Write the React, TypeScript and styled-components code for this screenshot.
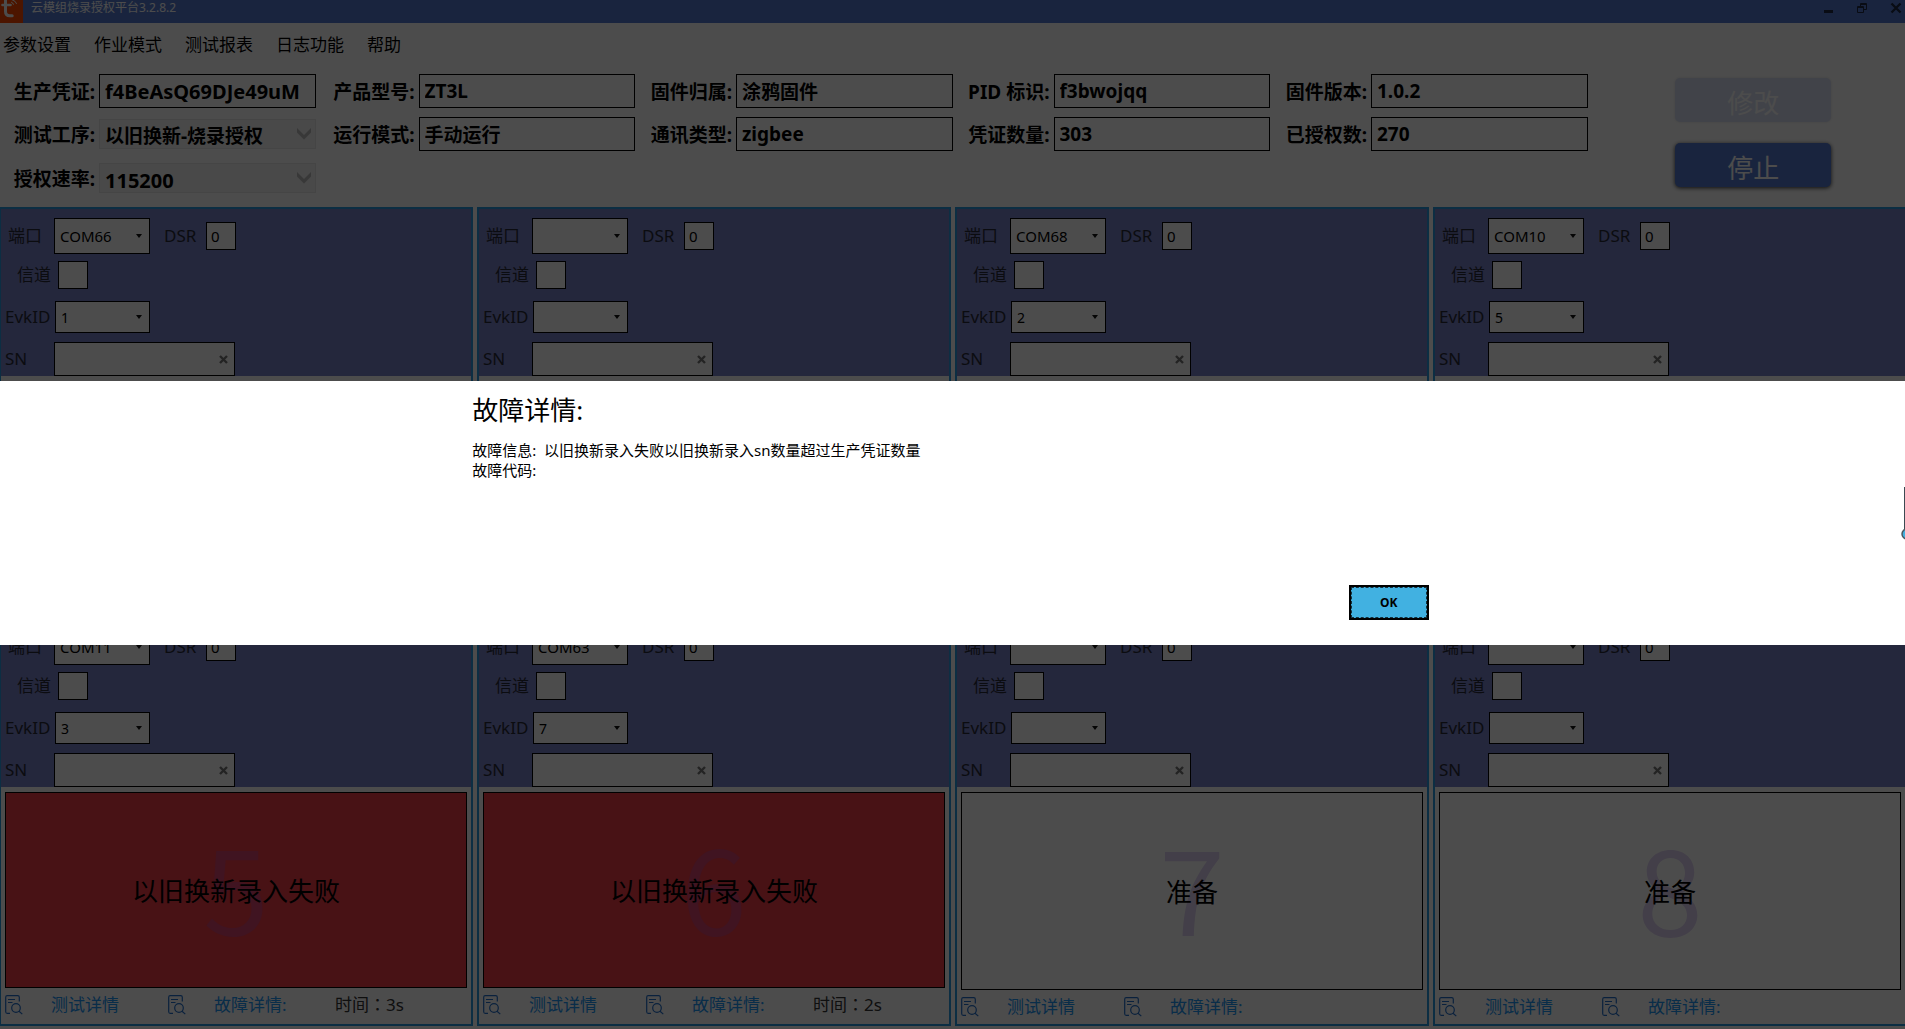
import React, { useId } from "react";
import styled, { createGlobalStyle } from "styled-components";

const GlobalStyle = createGlobalStyle`
  * { box-sizing: border-box; }
  body {
    margin: 0;
    background: #fff;
    color: #000;
    font-family: "Noto Sans", "Noto Sans CJK SC", sans-serif;
  }
  button, input, select { font-family: inherit; color: inherit; }
`;

const Window = styled.div`
  display: flex;
  flex-direction: column;
  min-height: 100vh;
  overflow: hidden;
`;

/* ---------- title bar ---------- */

const TitleBar = styled.header`
  display: flex;
  align-items: flex-start;
  height: 23px;
  background: #557bd0;
  color: #fff;
`;

const AppTitle = styled.h1`
  flex: 1;
  margin: 0;
  padding-left: 8px;
  font-size: 12px;
  font-weight: 400;
  line-height: 16px;
`;

const WindowButtons = styled.div`
  display: flex;
  gap: 20px;
  padding: 1px 2px 0 0;
`;

const WindowButton = styled.button`
  display: flex;
  padding: 0;
  border: 0;
  background: none;
  color: #1e2a44;
`;

/* ---------- menu ---------- */

const Menu = styled.nav`
  display: flex;
  gap: 23px;
  padding-left: 3px;
`;

const MenuLink = styled.a`
  color: #000;
  font-size: 17px;
  line-height: 44px;
  text-decoration: none;
`;

/* ---------- settings ---------- */

const Settings = styled.form`
  display: grid;
  grid-template-columns: repeat(6, minmax(0, 1fr));
  grid-template-rows: 34px 34px 36px;
  row-gap: 9px;
  padding: 7px 0 11px;
  font-size: 19px;
  font-weight: 700;
`;

const Field = styled.div<{ $col: number; $row: number }>`
  grid-column: ${(p) => p.$col};
  grid-row: ${(p) => p.$row};
  display: flex;
  align-items: center;
  padding-right: ${(p) => (p.$col === 1 ? 2 : 0)}px;
`;

const FieldLabel = styled.label<{ $first: boolean }>`
  flex: 0 0 ${(p) => (p.$first ? 99 : 101)}px;
  padding-right: 4px;
  text-align: right;
  white-space: nowrap;
`;

const FieldInput = styled.input<{ $large?: boolean }>`
  flex: 1;
  min-width: 0;
  height: 34px;
  padding: 0 5px;
  border: 1px solid #000;
  border-radius: 0;
  background: #fff;
  font-size: ${(p) => (p.$large ? 20 : 19)}px;
  font-weight: 700;
`;

const SelectBox = styled.span<{ $grow?: boolean; $width?: number }>`
  position: relative;
  display: flex;
  flex: ${(p) => (p.$grow ? "1" : "none")};
  width: ${(p) => (p.$width ? `${p.$width}px` : "auto")};
`;

const FieldSelect = styled.select<{ $large?: boolean }>`
  width: 100%;
  height: 30px;
  padding: 3px 5px 0;
  border: 1px solid #e6e6e6;
  border-radius: 0;
  background: #f3f3f3;
  font-size: ${(p) => (p.$large ? 20 : 19)}px;
  font-weight: 700;
  appearance: none;
  &:disabled { color: #000; opacity: 1; }
`;

const SelectMark = styled.svg<{ $right: number }>`
  position: absolute;
  top: 0;
  bottom: 0;
  right: ${(p) => p.$right}px;
  margin: auto 0;
  pointer-events: none;
`;

const Actions = styled.div`
  grid-column: 6;
  grid-row: 1 / span 3;
  display: flex;
  flex-direction: column;
  align-items: center;
  gap: 21px;
  padding: 4px 0 0 14px;
`;

const ActionButton = styled.button`
  flex: none;
  width: 156px;
  height: 44px;
  padding: 5px 0 0;
  border: 0;
  border-radius: 5px;
  background: #557bd0;
  box-shadow: 0 1px 4px rgba(0, 0, 0, 0.8);
  color: #fff;
  font-size: 26px;
  line-height: 36px;
  &:disabled {
    background: #dae1f4;
    box-shadow: 0 0 3px rgba(0, 0, 0, 0.12);
    color: #fff;
  }
`;

/* ---------- station panels ---------- */

const Stations = styled.main`
  flex: 1;
  display: grid;
  grid-template-columns: repeat(4, minmax(0, 1fr));
  grid-auto-rows: 1fr;
  gap: 3px 4px;
  margin: 0 -2px 3px -1px;
`;

const Panel = styled.section`
  display: flex;
  flex-direction: column;
  border: 2px solid #2a9be0;
  background: #fff;
`;

const PanelForm = styled.form`
  display: grid;
  grid-template-rows: 43px 40px 41px 34px;
  align-items: start;
  padding: 9px 0 0 4px;
  background: #7b82c8;
  font-size: 17px;
`;

const PanelRow = styled.div`
  display: flex;
  align-items: center;
`;

const PanelLabel = styled.label<{ $width: number; $indent?: number }>`
  width: ${(p) => p.$width}px;
  padding-left: ${(p) => p.$indent ?? 0}px;
  color: #272a38;
  line-height: 28px;
  white-space: nowrap;
`;

const PanelSelect = styled.select<{ $tall?: boolean }>`
  width: 100%;
  height: ${(p) => (p.$tall ? 36 : 32)}px;
  padding: 0 5px;
  border: 1px solid #000;
  border-radius: 0;
  background: #fff;
  font-size: ${(p) => (p.$tall ? 15 : 14)}px;
  appearance: none;
`;

const SmallInput = styled.input`
  width: 30px;
  height: 28px;
  padding: 0 4px;
  border: 1px solid #000;
  border-radius: 0;
  background: #fff;
  font-size: 15px;
`;

const SnBox = styled.span`
  display: flex;
  align-items: center;
  width: 181px;
  height: 34px;
  padding-right: 6px;
  border: 1px solid #000;
  background: #fff;
`;

const SnInput = styled.input`
  flex: 1;
  min-width: 0;
  border: 0;
  background: none;
  outline: 0;
  font-size: 15px;
`;

const ClearButton = styled.button`
  display: flex;
  padding: 0;
  border: 0;
  background: none;
  color: #777;
`;

const Status = styled.div<{ $failed?: boolean }>`
  flex: 1;
  display: grid;
  place-items: center;
  margin: 5px 4px 0;
  border: 1px solid #000;
  background: ${(p) => (p.$failed ? "#f03c49" : "#fff")};
`;

const StationNumber = styled.span`
  grid-area: 1 / 1;
  padding-bottom: 12px;
  color: rgba(140, 94, 212, 0.27);
  font-family: "Noto Sans CJK SC", sans-serif;
  font-size: 118px;
  line-height: 120px;
`;

const StatusText = styled.strong`
  grid-area: 1 / 1;
  position: relative;
  padding-top: 2px;
  font-size: 26px;
  font-weight: 400;
  line-height: 36px;
`;

const PanelFooter = styled.footer<{ $raised?: boolean }>`
  display: grid;
  grid-template-columns: 163px 167px auto;
  padding: 0 4px ${(p) => (p.$raised ? 2 : 0)}px;
  font-size: 17px;
  line-height: 34px;
`;

const DetailLink = styled.a`
  display: flex;
  align-items: center;
  gap: 28px;
  color: #2196f3;
  text-decoration: none;
`;

const Elapsed = styled.span`
  color: #333;
  font-family: "Noto Sans", "Noto Sans CJK TC", sans-serif;
`;

/* ---------- dialog ---------- */

const Scrim = styled.div`
  position: fixed;
  inset: 0;
  display: flex;
  align-items: center;
  padding-bottom: 3px;
  background: rgba(0, 0, 0, 0.7);
`;

const Dialog = styled.div`
  position: relative;
  flex: 1;
  overflow: hidden;
  padding: 11px 25% 25px calc(25% - 4px);
  background: #fff;
`;

const DialogTitle = styled.h2`
  margin: 0 0 12px;
  font-size: 26px;
  font-weight: 400;
  line-height: 36px;
`;

const DialogBody = styled.p`
  min-height: 145px;
  margin: 0;
  font-size: 15px;
  line-height: 20px;
  white-space: pre-line;
`;

const DialogActions = styled.div`
  display: flex;
  justify-content: flex-end;
`;

const OkButton = styled.button`
  width: 80px;
  height: 35px;
  padding: 0;
  border: 2px solid #000;
  outline: 1px dashed #14303c;
  outline-offset: -3px;
  background: #41b1e1;
  font-size: 12px;
  font-weight: 700;
`;

const EdgeSlider = styled.svg`
  position: absolute;
  top: 105px;
  right: 0;
`;

/* ---------- drawings ---------- */

const Logo = () => (
  <svg width="23" height="23" viewBox="0 0 23 23" aria-hidden="true">
    <rect width="23" height="23" fill="#ff4800" />
    <path d="M5.500 0v11.500q0 4.300 4.300 4.300h2.400" fill="none" stroke="#fff" strokeWidth="3" strokeLinecap="round" />
    <path d="M2.500 5h8" fill="none" stroke="#fff" strokeWidth="2.600" strokeLinecap="round" />
    <path d="M11.500 2.200q1.600.4 1.900 2.100M12.500 0q3.200.8 4 3.500" fill="none" stroke="#fff" strokeWidth="1" strokeLinecap="round" />
  </svg>
);

const Chevron = () => (
  <SelectMark $right={5} width="14" height="12" viewBox="0 0 14 12" aria-hidden="true">
    <path d="M0 0l7 7 7-7v4.500l-7 7-7-7z" fill="#bdbdbd" />
  </SelectMark>
);

const Caret = () => (
  <SelectMark $right={8} width="6" height="4" viewBox="0 0 6 4" aria-hidden="true">
    <path d="M0 0h6L3 4z" fill="#111" />
  </SelectMark>
);

const FileSearch = () => (
  <svg width="18" height="20" viewBox="0 0 18 20" fill="none" stroke="#2470cc" strokeWidth="1.200" aria-hidden="true">
    <path d="M5 18.300H2.200Q.7 18.300.7 16.800V2.200Q.7.7 2.200.7h10.600q1.500 0 1.500 1.500v4.300" />
    <path d="M3 4.500h7M3 7.500h4.500" />
    <circle cx="11" cy="13" r="4.300" />
    <path d="M14 16.300l3.300 2.800" />
  </svg>
);

/* ---------- data ---------- */

type FieldData = {
  label: string;
  value: string;
  col: number;
  row: number;
  select?: boolean;
  large?: boolean;
};

const FIELDS: FieldData[] = [
  { label: "生产凭证:", value: "f4BeAsQ69DJe49uM", col: 1, row: 1, large: true },
  { label: "产品型号:", value: "ZT3L", col: 2, row: 1 },
  { label: "固件归属:", value: "涂鸦固件", col: 3, row: 1 },
  { label: "PID 标识:", value: "f3bwojqq", col: 4, row: 1 },
  { label: "固件版本:", value: "1.0.2", col: 5, row: 1 },
  { label: "测试工序:", value: "以旧换新-烧录授权", col: 1, row: 2, select: true },
  { label: "运行模式:", value: "手动运行", col: 2, row: 2 },
  { label: "通讯类型:", value: "zigbee", col: 3, row: 2 },
  { label: "凭证数量:", value: "303", col: 4, row: 2 },
  { label: "已授权数:", value: "270", col: 5, row: 2 },
  { label: "授权速率:", value: "115200", col: 1, row: 3, select: true, large: true },
];

type StationData = {
  port: string;
  evk: string;
  number?: number;
  status?: string;
  failed?: boolean;
  elapsed?: string;
};

const STATIONS: StationData[] = [
  { port: "COM66", evk: "1" },
  { port: "", evk: "" },
  { port: "COM68", evk: "2" },
  { port: "COM10", evk: "5" },
  { port: "COM11", evk: "3", number: 5, status: "以旧换新录入失败", failed: true, elapsed: "3s" },
  { port: "COM63", evk: "7", number: 6, status: "以旧换新录入失败", failed: true, elapsed: "2s" },
  { port: "", evk: "", number: 7, status: "准备" },
  { port: "", evk: "", number: 8, status: "准备" },
];

const SettingField = ({ label, value, col, row, select, large }: FieldData) => {
  const id = useId();
  return (
    <Field $col={col} $row={row}>
      <FieldLabel htmlFor={id} $first={col === 1}>{label}</FieldLabel>
      {select ? (
        <SelectBox $grow>
          <FieldSelect id={id} $large={large} disabled defaultValue={value}>
            <option>{value}</option>
          </FieldSelect>
          <Chevron />
        </SelectBox>
      ) : (
        <FieldInput id={id} $large={large} readOnly value={value} />
      )}
    </Field>
  );
};

const Station = ({ port, evk, number, status, failed, elapsed }: StationData) => {
  const id = useId();
  return (
    <Panel>
      <PanelForm>
        <PanelRow>
          <PanelLabel htmlFor={`${id}port`} $width={49} $indent={3}>端口</PanelLabel>
          <SelectBox $width={96}>
            <PanelSelect id={`${id}port`} $tall defaultValue={port}>
              <option>{port}</option>
            </PanelSelect>
            <Caret />
          </SelectBox>
          <PanelLabel htmlFor={`${id}dsr`} $width={56} $indent={14}>DSR</PanelLabel>
          <SmallInput id={`${id}dsr`} defaultValue="0" />
        </PanelRow>
        <PanelRow>
          <PanelLabel htmlFor={`${id}channel`} $width={53} $indent={12}>信道</PanelLabel>
          <SmallInput id={`${id}channel`} />
        </PanelRow>
        <PanelRow>
          <PanelLabel htmlFor={`${id}evk`} $width={50}>EvkID</PanelLabel>
          <SelectBox $width={95}>
            <PanelSelect id={`${id}evk`} defaultValue={evk}>
              <option>{evk}</option>
            </PanelSelect>
            <Caret />
          </SelectBox>
        </PanelRow>
        <PanelRow>
          <PanelLabel htmlFor={`${id}sn`} $width={49}>SN</PanelLabel>
          <SnBox>
            <SnInput id={`${id}sn`} />
            <ClearButton type="button">
              <svg width="9" height="9" viewBox="0 0 9 9" aria-hidden="true">
                <path d="M1 1l7 7M8 1L1 8" stroke="currentColor" strokeWidth="2.400" />
              </svg>
            </ClearButton>
          </SnBox>
        </PanelRow>
      </PanelForm>
      <Status $failed={failed}>
        {number && <StationNumber>{number}</StationNumber>}
        {status && <StatusText>{status}</StatusText>}
      </Status>
      {status && (
        <PanelFooter $raised={failed}>
          <DetailLink href="#test"><FileSearch />测试详情</DetailLink>
          <DetailLink href="#fault"><FileSearch />故障详情:</DetailLink>
          {elapsed && <Elapsed>时间：{elapsed}</Elapsed>}
        </PanelFooter>
      )}
    </Panel>
  );
};

export default function App() {
  return (
    <>
      <GlobalStyle />
      <Window>
        <TitleBar>
          <Logo />
          <AppTitle>云模组烧录授权平台3.2.8.2</AppTitle>
          <WindowButtons>
            <WindowButton type="button">
              <svg width="14" height="14" viewBox="0 0 14 14" aria-hidden="true">
                <path d="M3 9h9v3H3z" fill="currentColor" />
              </svg>
            </WindowButton>
            <WindowButton type="button">
              <svg width="14" height="14" viewBox="0 0 14 14" fill="none" stroke="currentColor" aria-hidden="true">
                <path d="M2.500 5.500h6v6h-6zM5.500 5V2.500h6v6H9M2.500 6.500h6M5.500 3.500h6" />
              </svg>
            </WindowButton>
            <WindowButton type="button">
              <svg width="14" height="14" viewBox="0 0 14 14" aria-hidden="true">
                <path d="M2.500 2.500l9 9M11.500 2.500l-9 9" stroke="currentColor" strokeWidth="2.400" />
              </svg>
            </WindowButton>
          </WindowButtons>
        </TitleBar>
        <Menu>
          {["参数设置", "作业模式", "测试报表", "日志功能", "帮助"].map((item) => (
            <MenuLink key={item} href="#menu">{item}</MenuLink>
          ))}
        </Menu>
        <Settings>
          {FIELDS.map((field) => (
            <SettingField key={field.label} {...field} />
          ))}
          <Actions>
            <ActionButton type="button" disabled>修改</ActionButton>
            <ActionButton type="button">停止</ActionButton>
          </Actions>
        </Settings>
        <Stations>
          {STATIONS.map((station, i) => (
            <Station key={i} {...station} />
          ))}
        </Stations>
      </Window>
      <Scrim>
        <Dialog role="dialog" aria-modal="true" aria-labelledby="fault-title">
          <DialogTitle id="fault-title">故障详情:</DialogTitle>
          <DialogBody>
            故障信息:&nbsp; 以旧换新录入失败以旧换新录入sn数量超过生产凭证数量{"\n"}故障代码:
          </DialogBody>
          <DialogActions>
            <OkButton type="button">OK</OkButton>
          </DialogActions>
          <EdgeSlider width="4" height="56" viewBox="0 0 4 56" aria-hidden="true">
            <path d="M3.500 1v46" stroke="#3c4a52" />
            <circle cx="6" cy="48" r="5" fill="#41b1e1" stroke="#4a5860" strokeWidth="1.500" />
          </EdgeSlider>
        </Dialog>
      </Scrim>
    </>
  );
}
